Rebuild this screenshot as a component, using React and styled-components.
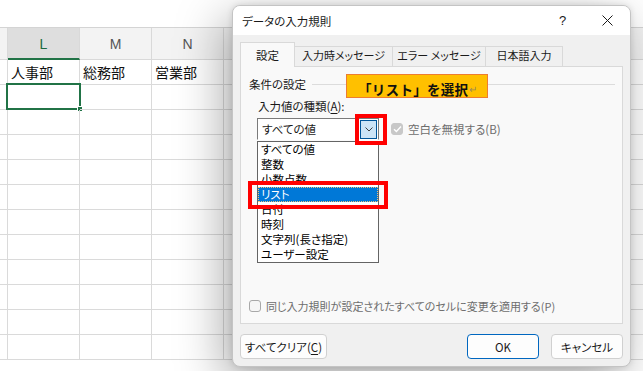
import React from 'react';
import styled, {createGlobalStyle} from 'styled-components';

const GlobalStyle = createGlobalStyle`
	html, body {
		margin: 0;
		padding: 0;
		background: #fff;
		overflow: hidden;
	}
	body {
		font-family: "Noto Sans CJK JP", "Noto Sans", sans-serif;
	}
`;

const Screen = styled.div`
	position: relative;
	width: 643px;
	height: 371px;
	overflow: hidden;
	background: #fff;
`;

const Ribbon = styled.div`
	height: 28px;
	box-sizing: border-box;
	border-bottom: 1px solid #d4d4d4;
`;

const Sheet = styled.div`
	display: grid;
	grid-template-columns: 8px repeat(9, 72px);
	grid-template-rows: 32px repeat(12, 25px);
`;

const HeadCell = styled.div`
	box-sizing: border-box;
	display: flex;
	align-items: center;
	justify-content: center;
	background: ${p => p.$active ? '#dedede' : '#f3f3f3'};
	border-right: 1px solid #d9d9d9;
	border-bottom: ${p => p.$active ? '2px solid #217346' : '1px solid #d9d9d9'};
	padding-top: ${p => p.$active ? '1px' : '0'};
	color: ${p => p.$active ? '#1d6a40' : '#555'};
	font: 14px "Liberation Sans", Arial, sans-serif;
`;

const Cell = styled.div`
	position: relative;
	box-sizing: border-box;
	border-right: 1px solid #dadada;
	border-bottom: 1px solid #dadada;
	padding-left: 3px;
	font-size: 14px;
	line-height: 24px;
	color: #111;
	white-space: nowrap;
`;

const Selection = styled.div`
	position: absolute;
	left: -2px;
	top: -2px;
	width: 75px;
	height: 27px;
	box-sizing: border-box;
	border: 2px solid #217346;
`;

const FillHandle = styled.div`
	position: absolute;
	left: 69px;
	top: 21px;
	width: 6px;
	height: 6px;
	box-sizing: border-box;
	background: #217346;
	border: 1px solid #fff;
`;

const Dialog = styled.div`
	position: absolute;
	left: 232px;
	top: 5px;
	width: 399px;
	height: 362px;
	box-sizing: border-box;
	display: flex;
	flex-direction: column;
	border: 1px solid #c4c4c4;
	border-radius: 8px;
	background: #f0f0f0;
	overflow: hidden;
	box-shadow: -8px 14px 48px rgba(0, 0, 0, 0.34), 0 0 6px rgba(0, 0, 0, 0.12);
	font-family: "Noto Sans CJK JP", "Noto Sans", sans-serif;
	font-feature-settings: "palt";
	font-size: 11px;
	color: #1a1a1a;
`;

const TitleBar = styled.div`
	height: 29px;
	flex: none;
	display: flex;
	align-items: center;
	background: #fff;
	padding-left: 9px;
`;

const Title = styled.span`
	flex: 1;
	font-size: 11.5px;
`;

const TitleButton = styled.div`
	width: 45px;
	height: 29px;
	display: flex;
	align-items: center;
	justify-content: center;
	font: 13px "Liberation Sans", Arial, sans-serif;
	color: #1a1a1a;
`;

const Body = styled.div`
	flex: 1;
	display: flex;
	flex-direction: column;
	padding: 8px 7px 7px 7px;
`;

const TabStrip = styled.div`
	display: flex;
	align-items: flex-end;
	height: 24px;
	margin-bottom: -1px;
	position: relative;
	z-index: 1;
`;

const Tab = styled.div`
	box-sizing: border-box;
	width: ${p => p.$w}px;
	height: ${p => p.$active ? 25 : 21}px;
	margin-left: -1px;
	display: flex;
	align-items: center;
	justify-content: center;
	padding-bottom: ${p => p.$active ? 0 : 3}px;
	border: 1px solid #d9d9d9;
	border-bottom: ${p => p.$active ? 'none' : '1px solid #d9d9d9'};
	background: ${p => p.$active ? '#f9f9f9' : '#f0f0f0'};
	font-size: ${p => p.$active ? 11.5 : 11}px;
	white-space: nowrap;
	&:first-child {
		margin-left: 0;
	}
`;

const Panel = styled.div`
	position: relative;
	flex: 1;
	display: flex;
	flex-direction: column;
	box-sizing: border-box;
	border: 1px solid #d9d9d9;
	background: #f9f9f9;
	padding: 9px 7px 9px 8px;
`;

const GroupHead = styled.div`
	display: flex;
	align-items: center;
	height: 16px;
	gap: 6px;
	font-size: 11.5px;
	&::after {
		content: "";
		flex: 1;
		height: 1px;
		background: #dcdcdc;
	}
`;

const FieldLabel = styled.div`
	margin: 6px 0 0 9px;
	height: 16px;
	line-height: 16px;
	font-size: 11.5px;
`;

const Key = styled.span`
	text-decoration: underline;
	text-underline-offset: 2px;
`;

const ComboRow = styled.div`
	display: flex;
	align-items: center;
	margin: 4px 0 0 8px;
`;

const Combo = styled.div`
	box-sizing: border-box;
	width: 122px;
	height: 22px;
	display: flex;
	align-items: center;
	justify-content: space-between;
	padding: 0 1px 0 4px;
	border: 1px solid #7a7a7a;
	border-bottom-color: #fff;
	background: #fff;
	font-size: 11.5px;
`;

const DropButton = styled.div`
	box-sizing: border-box;
	width: 17px;
	height: 19px;
	display: flex;
	align-items: center;
	justify-content: center;
	background: #cce4f7;
	border: 1px solid #005499;
`;

const Check = styled.label`
	display: flex;
	align-items: center;
	gap: 5px;
	margin-left: ${p => p.$ml || 0}px;
	color: #6d6d6d;
	white-space: nowrap;
	font-size: 11.5px;
`;

const Box = styled.span`
	box-sizing: border-box;
	width: 12px;
	height: 12px;
	display: flex;
	align-items: center;
	justify-content: center;
	border-radius: 3px;
	background: ${p => p.$checked ? '#c8c8c8' : '#f6f6f6'};
	border: 1px solid ${p => p.$checked ? '#c8c8c8' : '#a8a8a8'};
`;

const BottomCheck = styled(Check)`
	margin-top: auto;
	margin-left: 0;
	height: 16px;
	font-size: 11px;
`;

const DropList = styled.div`
	position: absolute;
	left: 16px;
	top: 74px;
	width: 122px;
	box-sizing: border-box;
	border: 1px solid #646464;
	background: #fff;
`;

const Item = styled.div`
	box-sizing: border-box;
	height: 15px;
	line-height: 15px;
	padding-left: 3px;
	font-size: 11.5px;
	color: ${p => p.$selected ? '#fff' : '#000'};
	background: ${p => p.$selected ? '#0078d7' : 'transparent'};
	outline: ${p => p.$selected ? '1px dotted #f3c27a' : 'none'};
	outline-offset: -1px;
	white-space: nowrap;
`;

const RedFrame = styled.div`
	position: absolute;
	left: ${p => p.$x}px;
	top: ${p => p.$y}px;
	width: ${p => p.$w}px;
	height: ${p => p.$h}px;
	box-sizing: border-box;
	border: 4px solid #ff0000;
	z-index: 3;
`;

const Callout = styled.div`
	position: absolute;
	left: 105px;
	top: 7px;
	width: 142px;
	height: 24px;
	box-sizing: border-box;
	display: flex;
	align-items: center;
	padding: 5px 0 0 11px;
	background: #ffc000;
	border: 1px solid #ed7d31;
	font-feature-settings: normal;
	font-size: 13.5px;
	font-weight: 700;
	letter-spacing: 0.3px;
	color: #111;
	white-space: nowrap;
`;

const Return = styled.span`
	font-size: 10px;
	font-weight: 400;
	color: #9a8a5a;
	margin-left: 1px;
`;

const ButtonRow = styled.div`
	display: flex;
	gap: 12px;
	margin-top: 10px;
	height: 25px;
`;

const Button = styled.div`
	box-sizing: border-box;
	width: ${p => p.$w}px;
	height: 25px;
	display: flex;
	align-items: center;
	justify-content: center;
	margin-left: ${p => p.$push ? 'auto' : '0'};
	border: 1px solid ${p => p.$primary ? '#0067c0' : '#d0d0d0'};
	border-radius: 4px;
	background: #fdfdfd;
	color: #1a1a1a;
	font-size: 11.5px;
	white-space: nowrap;
`;

// columns after N sit under the dialog, so they carry no letter
const columns = ['', 'L', 'M', 'N', '', '', '', '', '', ''];
const firstRow = ['', '人事部', '総務部', '営業部'];
const tabs = [
	{label: '設定', w: 55, active: true},
	{label: '入力時メッセージ', w: 99},
	{label: 'エラー メッセージ', w: 94},
	{label: '日本語入力', w: 78},
];
const kinds = ['すべての値', '整数', '小数点数', 'リスト', '日付', '時刻', '文字列(長さ指定)', 'ユーザー設定'];

const Chevron = () => (
	<svg width="8" height="5" viewBox="0 0 8 5">
		<path d="M0.5 0.5 L4 4 L7.5 0.5" fill="none" stroke="#404040" strokeWidth="1"/>
	</svg>
);

const Tick = () => (
	<svg width="9" height="8" viewBox="0 0 9 8">
		<path d="M1 4.2 L3.4 6.5 L8 1.5" fill="none" stroke="#fff" strokeWidth="1.4"/>
	</svg>
);

const CloseIcon = () => (
	<svg width="11" height="11" viewBox="0 0 11 11">
		<path d="M0.5 0.5 L10.5 10.5 M10.5 0.5 L0.5 10.5" stroke="#1a1a1a" strokeWidth="1"/>
	</svg>
);

const App = () => {
	const rows = Array.from({length: 12}, (_, r) => r);
	return (
		<Screen>
			<GlobalStyle/>
			<Ribbon/>
			<Sheet>
				{columns.map((c, i) => <HeadCell key={'h' + i} $active={c === 'L'}>{c}</HeadCell>)}
				{rows.map(r => columns.map((c, i) => (
					<Cell key={r + '-' + i}>
						{r === 0 ? firstRow[i] : ''}
						{r === 1 && c === 'L' && <Selection><FillHandle/></Selection>}
					</Cell>
				)))}
			</Sheet>

			<Dialog>
				<TitleBar>
					<Title>データの入力規則</Title>
					<TitleButton>?</TitleButton>
					<TitleButton><CloseIcon/></TitleButton>
				</TitleBar>
				<Body>
					<TabStrip>
						{tabs.map(t => <Tab key={t.label} $w={t.w} $active={t.active}>{t.label}</Tab>)}
					</TabStrip>
					<Panel>
						<GroupHead>条件の設定</GroupHead>
						<FieldLabel>入力値の種類(<Key>A</Key>):</FieldLabel>
						<ComboRow>
							<Combo>
								すべての値
								<DropButton><Chevron/></DropButton>
							</Combo>
							<Check $ml={12}>
								<Box $checked><Tick/></Box>
								空白を無視する(B)
							</Check>
						</ComboRow>
						<BottomCheck>
							<Box/>
							同じ入力規則が設定されたすべてのセルに変更を適用する(P)
						</BottomCheck>

						<DropList>
							{kinds.map(k => <Item key={k} $selected={k === 'リスト'}>{k}</Item>)}
						</DropList>
						<RedFrame $x={114} $y={47} $w={32} $h={31}/>
						<RedFrame $x={7} $y={114} $w={140} $h={28}/>
						<Callout>「リスト」を選択<Return>↵</Return></Callout>
					</Panel>
					<ButtonRow>
						<Button $w={87}>すべてクリア(<Key>C</Key>)</Button>
						<Button $w={72} $push $primary>OK</Button>
						<Button $w={72}>キャンセル</Button>
					</ButtonRow>
				</Body>
			</Dialog>
		</Screen>
	);
};

export default App;
